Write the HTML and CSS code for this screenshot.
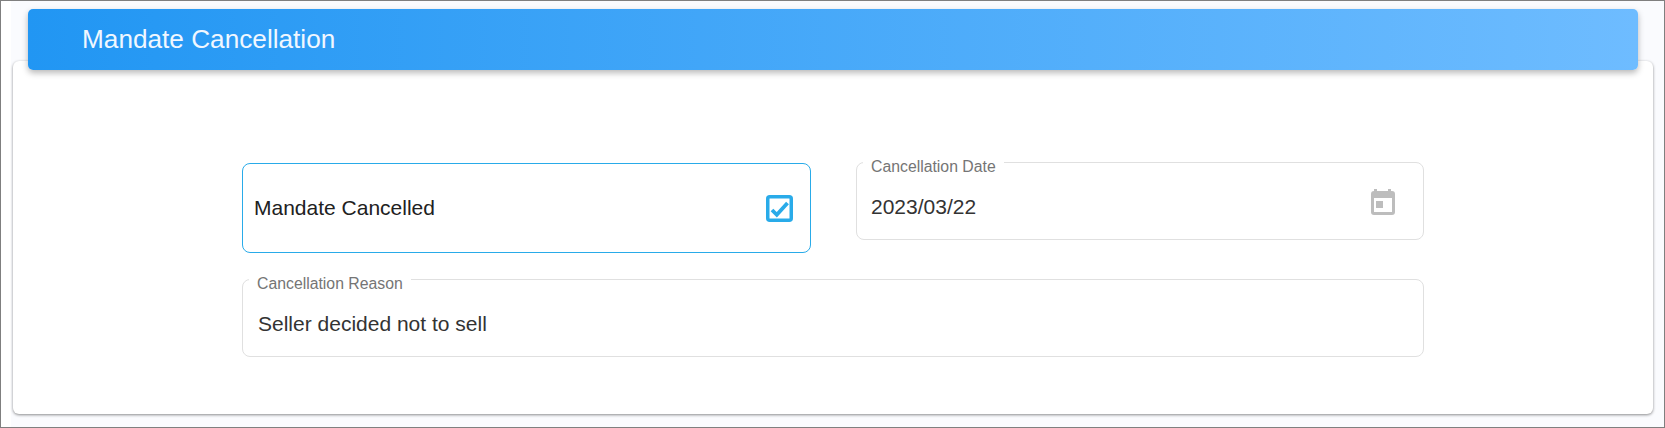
FILE: index.html
```html
<!DOCTYPE html>
<html lang="en">
<head>
    <meta charset="utf-8"/>
    <title>Mandate Cancellation</title>
    <link rel="stylesheet" href="styles.css">
</head>
<body>
    <div class="frame">
        <div class="page">
            <div class="card">
                <div class="card-header">Mandate Cancellation</div>
                <div class="form-grid">
                    <div class="check-box">
                        <span>Mandate Cancelled</span>
                        <svg class="check-icon" width="27" height="27" viewBox="0 0 27 27">
                            <rect x="1.750" y="1.750" width="23.500" height="23.500" rx="2" fill="none" stroke="#29abe9" stroke-width="3.500"/>
                            <path d="M6 15l4.800 4.800L21.500 8" fill="none" stroke="#29abe9" stroke-width="3.800"/>
                        </svg>
                    </div>
                    <div class="field">
                        <label class="field-label">Cancellation Date</label>
                        <div class="field-value">2023/03/22</div>
                        <svg class="calendar-icon" width="24" height="26" viewBox="0 0 24 26">
                            <path fill="#bdbdbd" fill-rule="evenodd" d="M3 0h3v2h11V0h3v2h1a3 3 0 0 1 3 3v18a3 3 0 0 1-3 3H3a3 3 0 0 1-3-3V5a3 3 0 0 1 3-3zM3 9v14h18V9zM5 12h7v7H5z"/>
                        </svg>
                    </div>
                    <div class="field field-wide">
                        <label class="field-label">Cancellation Reason</label>
                        <div class="field-value">Seller decided not to sell</div>
                    </div>
                </div>
            </div>
        </div>
    </div>
</body>
</html>
```

FILE: styles.css
```css
html, body {
    margin: 0;
    padding: 0;
}
body {
    font-family: "Liberation Sans", Arial, sans-serif;
    background: #fff;
}
.frame {
    box-sizing: border-box;
    height: 428px;
    border: 1px solid #7f7f7f;
    background: #fff;
    overflow: hidden;
}
.page {
    box-sizing: border-box;
    height: 100%;
    margin-left: 10px;
    padding: 60px 11px 0 2px;
    background: #fafbfe;
}
.card {
    display: flow-root;
    height: 353px;
    box-sizing: border-box;
    background: #fff;
    border-radius: 6px;
    box-shadow: 0 1px 3px rgba(0, 0, 0, 0.45);
}
.card-header {
    box-sizing: border-box;
    height: 61px;
    margin: -52px 15px 0;
    position: relative;
    padding-left: 54px;
    line-height: 60px;
    font-size: 26.2px;
    color: #f0f7ff;
    background: linear-gradient(90deg, #2196f3, #6ebcff);
    border-radius: 5px;
    box-shadow: 0 3px 6px rgba(0, 0, 0, 0.28);
}
.form-grid {
    display: grid;
    grid-template-columns: 569px 1fr;
    column-gap: 45px;
    align-items: start;
    margin: 92px 229px 0;
}
.check-box {
    box-sizing: border-box;
    height: 90px;
    margin-top: 1px;
    display: flex;
    align-items: center;
    justify-content: space-between;
    padding: 0 17px 0 11px;
    font-size: 21px;
    color: #212121;
    border: 1px solid #29abe9;
    border-radius: 8px;
}
.check-icon {
    display: block;
}
.field {
    box-sizing: border-box;
    height: 78px;
    position: relative;
    padding: 32px 14px 0;
    border: 1px solid #e0e0e0;
    border-radius: 8px;
}
.field-wide {
    grid-column: 1 / 3;
    margin-top: 26px;
}
.field-wide .field-value {
    padding-left: 1px;
}
.field-label {
    position: absolute;
    top: -5px;
    left: 6px;
    padding: 0 8px;
    font-size: 15.8px;
    line-height: 18px;
    color: #757575;
    background: #fff;
}
.field-value {
    font-size: 21px;
    line-height: 24px;
    color: #333;
}
.calendar-icon {
    position: absolute;
    top: 26px;
    right: 28px;
}
```
